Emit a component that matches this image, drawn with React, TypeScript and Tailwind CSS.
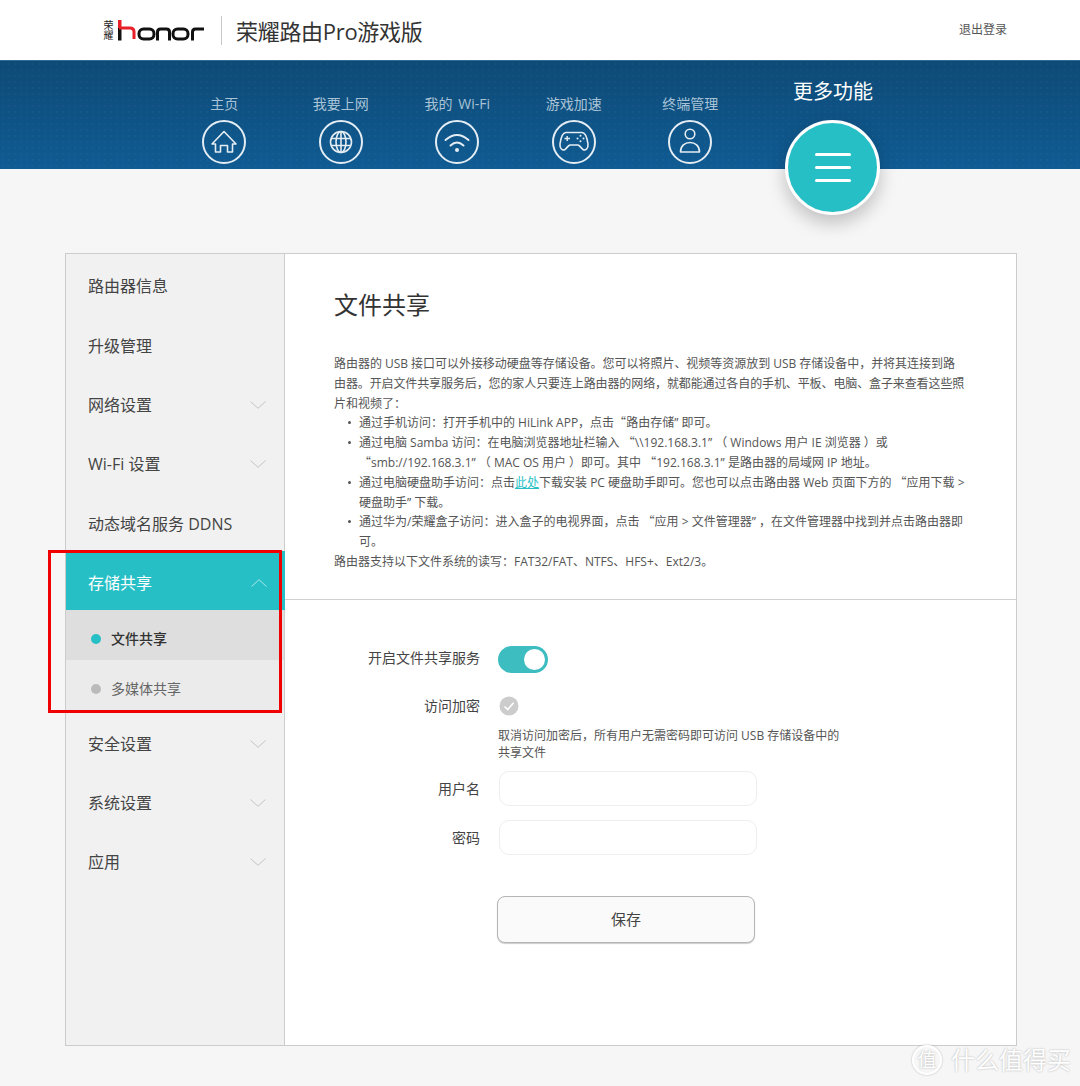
const navItems = [
  { label: "主页", icon: "home" },
  { label: "我要上网", icon: "globe" },
  { label: "我的 Wi-Fi", icon: "wifi" },
  { label: "游戏加速", icon: "game" },
  { label: "终端管理", icon: "user" },
];

function NavIcon({ name }: { name: string }) {
  return (
    <svg width="44" height="44" viewBox="0 0 44 44" fill="none" stroke="#e4edf3" strokeWidth="1.6" strokeLinejoin="round">
      <circle cx="22" cy="22" r="21" strokeWidth="2" />
      {name === "home" && <path d="M10 24 L22 11.5 L34 24 H30.5 V32 H25.5 V25.5 H18.5 V32 H13.5 V24 Z" />}
      {name === "globe" && (
        <>
          <circle cx="22" cy="22" r="10.5" />
          <ellipse cx="22" cy="22" rx="5" ry="10.5" />
          <path d="M22 11.5 V32.5 M12.5 18.5 H31.5 M12.5 25.5 H31.5" />
        </>
      )}
      {name === "wifi" && (
        <>
          <path d="M10.5 20 Q22 10 33.5 20" strokeLinecap="round" strokeWidth="2" />
          <path d="M15.5 25.5 Q22 19.5 28.5 25.5" strokeLinecap="round" strokeWidth="2" />
          <circle cx="22" cy="30" r="2" fill="#e4edf3" stroke="none" />
        </>
      )}
      {name === "game" && (
        <>
          <path d="M14 12.5 H30 C33 12.5 35 17 36 24 C36.5 28.5 33.5 31 31 29.5 C29 28 28 25.5 26 25 H18 C16 25.5 15 28 13 29.5 C10.5 31 7.5 28.5 8 24 C9 17 11 12.5 14 12.5 Z" />
          <path d="M12.5 18.5 H18 M15.2 16 V21" strokeWidth="1.4" />
          <g fill="#e4edf3" stroke="none">
            <circle cx="28.5" cy="15.8" r="1" />
            <circle cx="31.5" cy="18.5" r="1" />
            <circle cx="25.5" cy="18.5" r="1" />
            <circle cx="28.5" cy="21.2" r="1" />
          </g>
        </>
      )}
      {name === "user" && (
        <>
          <circle cx="22" cy="14" r="4.8" />
          <path d="M12.5 32 C12.5 25.5 17 22.5 22 22.5 C27 22.5 31.5 25.5 31.5 32 Z" />
        </>
      )}
    </svg>
  );
}

function Chevron({ up, color }: { up?: boolean; color: string }) {
  return (
    <svg width="16" height="8" viewBox="0 0 16 8" fill="none" stroke={color} strokeWidth="1">
      <path d={up ? "M0.5 7.5 L8 0.7 L15.5 7.5" : "M0.5 0.5 L8 7.3 L15.5 0.5"} />
    </svg>
  );
}

function SideItem({ label, arrow, active }: { label: string; arrow?: boolean; active?: boolean }) {
  return (
    <div
      className={`flex h-[59.4px] items-center justify-between pl-[22px] pr-[18px] pt-[5px] text-base ${
        active ? "w-[219px] bg-[#27bfc6] text-white" : "text-[#444444]"
      }`}
    >
      <span>{label}</span>
      {arrow && <Chevron up={active} color={active ? "#a9e6e9" : "#c4c4c4"} />}
    </div>
  );
}

function Logo() {
  return (
    <svg width="87" height="21" viewBox="0 0 87 21" fill="none" stroke="#111111" strokeWidth="3">
      <rect x="0" y="8" width="3.5" height="12.5" fill="#111111" stroke="none" />
      <rect x="0" y="0" width="3.5" height="8" fill="#e8202a" stroke="none" />
      <path d="M1 8 H12 Q16 8 16 12 V19" stroke="#e8202a" />
      <rect x="21" y="9" width="15" height="10" rx="4.5" />
      <path d="M39.5 20.5 V12 Q39.5 9 42.5 9 H48.5 Q51.5 9 51.5 12 V20.5" />
      <rect x="55" y="9" width="15" height="10" rx="4.5" />
      <path d="M74.5 20.5 V12 Q74.5 9 77.5 9 H86" />
    </svg>
  );
}

// opening quote is full width in the reference, closing one is not
function Q() {
  return <span className="font-['Noto_Sans_CJK_SC'] leading-none">“</span>;
}

function Bullet({ children }: { children: React.ReactNode }) {
  return (
    <li className="relative before:absolute before:left-[-11px] before:top-[8px] before:h-[3px] before:w-[3px] before:rounded-full before:bg-[#555555]">
      {children}
    </li>
  );
}

function FormRow({
  label,
  children,
  className,
  labelClass,
}: {
  label: string;
  children: React.ReactNode;
  className?: string;
  labelClass?: string;
}) {
  return (
    <div className={`flex items-center ${className ?? ""}`}>
      <div className={`w-[195px] text-right text-sm text-[#444444] ${labelClass ?? ""}`}>{label}</div>
      <div className="ml-[18px]">{children}</div>
    </div>
  );
}

export default function App() {
  return (
    <div className="relative h-[1086px] w-[1080px] overflow-hidden bg-[#f6f6f6] font-['Open_Sans','Noto_Sans_CJK_SC',sans-serif]">
      {/* Header */}
      <header className="flex h-[60px] items-center bg-white pl-[103px]">
        <div className="text-[10px] leading-[10px] tracking-[0.5px] text-[#222222] [writing-mode:vertical-rl]">荣耀</div>
        <div className="ml-[5px]">
          <Logo />
        </div>
        <div className="ml-[16px] h-[29px] w-px bg-[#c8c8c8]" />
        <div className="ml-[14px] pt-[2px] text-[22px] tracking-[-0.3px] text-[#333333]">荣耀路由Pro游戏版</div>
        <div className="ml-auto mr-[73px] text-xs text-[#555555]">退出登录</div>
      </header>

      {/* Nav band */}
      <nav className="relative h-[109px] border-t border-[#2f6c95] bg-[radial-gradient(rgba(255,255,255,0.025)_1px,transparent_1.2px),linear-gradient(180deg,#0e4a76,#0f5b93)] bg-[length:6px_6px,100%_100%] pl-[166px] pt-[33px]">
        <div className="flex">
          {navItems.map((item) => (
            <div key={item.label} className="flex w-[116.5px] flex-col items-center">
              <div className="h-5 text-sm leading-5 text-[#a9c3d6] [word-spacing:2px]">{item.label}</div>
              <div className="mt-[6px]">
                <NavIcon name={item.icon} />
              </div>
            </div>
          ))}
        </div>
        <div className="absolute left-[773px] top-[16px] w-[120px] text-center text-xl leading-[30px] text-white">更多功能</div>
        <div className="absolute left-[785px] top-[59px] flex h-[95px] w-[95px] flex-col items-center justify-center gap-[10px] rounded-full border-[3px] border-white bg-[#27bfc6] shadow-[0_8px_18px_rgba(0,0,0,0.22)]">
          <span className="h-[3px] w-9 rounded-full bg-white" />
          <span className="h-[3px] w-9 rounded-full bg-white" />
          <span className="h-[3px] w-9 rounded-full bg-white" />
        </div>
      </nav>

      {/* Main card */}
      <main className="ml-[65px] mt-[84px] flex h-[793px] w-[952px] border border-[#cccccc] bg-white">
        <aside className="w-[219px] shrink-0 border-r border-[#cccccc] bg-[#f1f1f1]">
          <SideItem label="路由器信息" />
          <SideItem label="升级管理" />
          <SideItem label="网络设置" arrow />
          <SideItem label="Wi-Fi 设置" arrow />
          <SideItem label="动态域名服务 DDNS" />
          <SideItem label="存储共享" arrow active />
          <div className="flex h-[50px] items-center gap-[10px] bg-[#dedede] pl-[25px] pt-2 text-sm font-medium text-[#333333]">
            <span className="h-[10px] w-[10px] rounded-full bg-[#27bfc6]" />
            <span>文件共享</span>
          </div>
          <div className="flex h-[51px] items-center gap-[10px] bg-[#ebebeb] pl-[25px] pt-1.5 text-sm text-[#666666]">
            <span className="h-[10px] w-[10px] rounded-full bg-[#bbbbbb]" />
            <span>多媒体共享</span>
          </div>
          <SideItem label="安全设置" arrow />
          <SideItem label="系统设置" arrow />
          <SideItem label="应用" arrow />
        </aside>

        <section className="flex-1">
          <div className="h-[346px] border-b border-[#d0d0d0] pl-[49px]">
            <h1 className="pt-[33px] text-2xl leading-9 text-[#333333]">文件共享</h1>
            <div className="mt-[31px] whitespace-nowrap text-xs leading-[19.8px] text-[#555555]">
              <div className="tracking-[-0.03px]">路由器的 USB 接口可以外接移动硬盘等存储设备。您可以将照片、视频等资源放到 USB 存储设备中，并将其连接到路</div>
              <div className="tracking-[-0.11px]">由器。开启文件共享服务后，您的家人只要连上路由器的网络，就都能通过各自的手机、平板、电脑、盒子来查看这些照</div>
              <div>片和视频了：</div>
              <ul className="relative pl-[25px]">
                <Bullet>
                  通过手机访问：打开手机中的 HiLink APP，点击<Q />路由存储” 即可。
                </Bullet>
                <Bullet>
                  通过电脑 Samba 访问：在电脑浏览器地址栏输入 <Q />\\192.168.3.1” （ Windows 用户 IE 浏览器 ）或
                  <br />
                  <Q />smb://192.168.3.1” （ MAC OS 用户 ）即可。其中 <Q />192.168.3.1” 是路由器的局域网 IP 地址。
                </Bullet>
                <Bullet>
                  通过电脑硬盘助手访问：点击<span className="text-[#27bfc6] underline">此处</span>下载安装 PC 硬盘助手即可。您也可以点击路由器 Web 页面下方的 <Q />应用下载 &gt;
                  <br />
                  硬盘助手” 下载。
                </Bullet>
                <Bullet>
                  通过华为/荣耀盒子访问：进入盒子的电视界面，点击 <Q />应用 &gt; 文件管理器” ，在文件管理器中找到并点击路由器即
                  <br />
                  可。
                </Bullet>
              </ul>
              <div>路由器支持以下文件系统的读写：FAT32/FAT、NTFS、HFS+、Ext2/3。</div>
            </div>
          </div>

          <div className="pt-[46px]">
            <FormRow label="开启文件共享服务" labelClass="pb-1">
              <div className="flex h-[27px] w-[50px] items-center justify-end rounded-full bg-[#3dbdc0] pr-[3px]">
                <span className="h-[21px] w-[21px] rounded-full bg-white" />
              </div>
            </FormRow>
            <FormRow label="访问加密" className="mt-[23px]">
              <svg width="20" height="20" viewBox="0 0 20 20" className="ml-px">
                <circle cx="10" cy="10" r="9.5" fill="#cccccc" />
                <path d="M5.5 10.5 L8.8 13.5 L14.5 6.8" fill="none" stroke="#ffffff" strokeWidth="1.6" />
              </svg>
            </FormRow>
            <div className="ml-[213px] mt-[11px] w-[345px] text-xs leading-[17px] text-[#555555]">
              取消访问加密后，所有用户无需密码即可访问 USB 存储设备中的
              <br />
              共享文件
            </div>
            <FormRow label="用户名" className="mt-[10px]">
              <div className="ml-px h-[35px] w-[258px] rounded-[10px] border border-[#eeeeee] bg-white" />
            </FormRow>
            <FormRow label="密码" className="mt-[14px]">
              <div className="ml-px h-[35px] w-[258px] rounded-[10px] border border-[#eeeeee] bg-white" />
            </FormRow>
            <button className="ml-[212px] mt-[41px] h-[47px] w-[258px] rounded-lg border border-[#b5b5b5] bg-[#fafafa] text-[15px] text-[#444444] shadow-[0_1px_1px_rgba(0,0,0,0.2)]">
              保存
            </button>
          </div>
        </section>
      </main>

      {/* Annotation box */}
      <div className="absolute left-[48px] top-[550px] h-[163px] w-[234px] border-[3px] border-[#f00000]" />

      {/* Watermark */}
      <div className="absolute left-[912px] top-[1045px] flex items-center text-white [text-shadow:0_0_2px_#aaaaaa]">
        <div className="flex h-[30px] w-[30px] items-center justify-center rounded-full border-2 border-white text-[19px] shadow-[0_0_2px_#aaaaaa]">值</div>
        <div className="ml-[9px] whitespace-nowrap text-2xl leading-[30px]">什么值得买</div>
      </div>
    </div>
  );
}
